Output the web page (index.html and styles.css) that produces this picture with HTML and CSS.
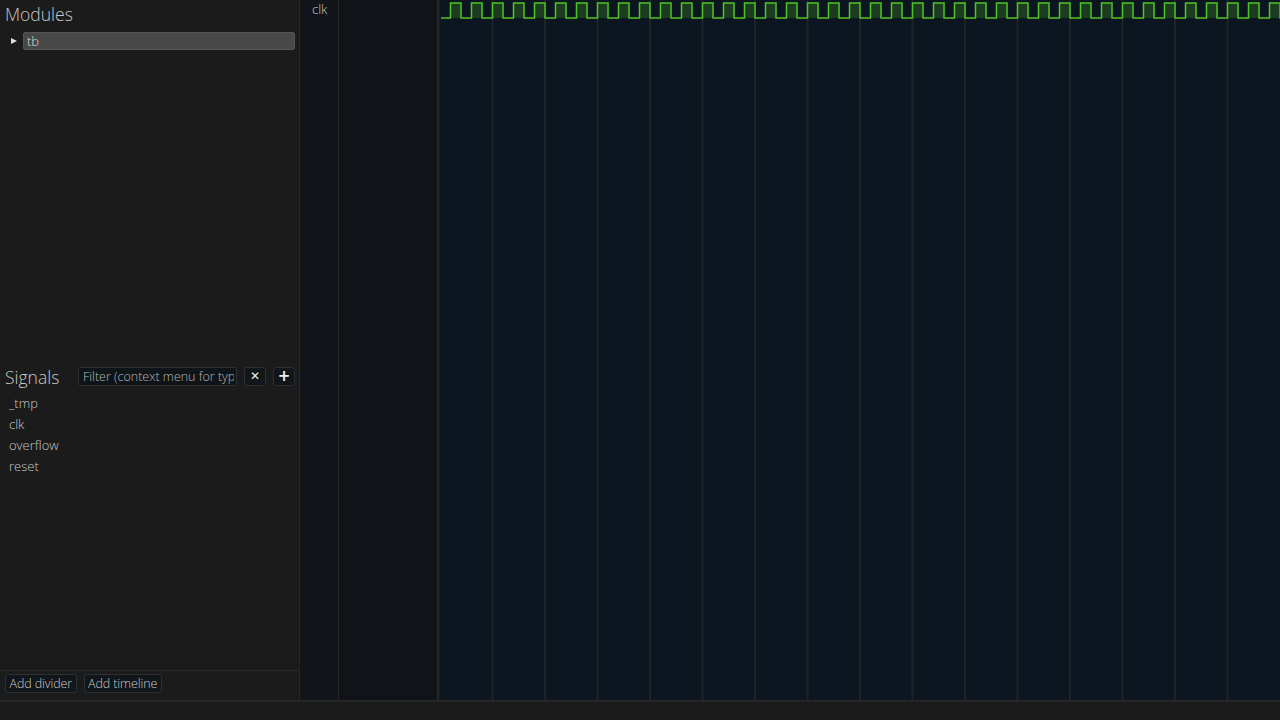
FILE: index.html
```html
<!DOCTYPE html>
<html>
<head>
<meta charset="utf-8">
<link rel="stylesheet" href="styles.css">
</head>
<body>
<div class="app">
  <div class="main">
    <aside class="sidebar">
      <section class="modules">
        <h2 class="heading">Modules</h2>
        <div class="tree-row">
          <span class="arrow"></span>
          <span class="tree-item selected">tb</span>
        </div>
      </section>
      <section class="signals">
        <div class="signals-head">
          <h2 class="heading">Signals</h2>
          <input class="filter" type="text" placeholder="Filter (context menu for type of filter)">
          <button class="icon-btn">&#x2715;</button>
          <button class="icon-btn plus">+</button>
        </div>
        <ul class="signal-list">
          <li>_tmp</li>
          <li>clk</li>
          <li>overflow</li>
          <li>reset</li>
        </ul>
      </section>
      <footer class="side-footer">
        <button class="btn">Add divider</button>
        <button class="btn">Add timeline</button>
      </footer>
    </aside>
    <div class="names-col">
      <div class="name-row">clk</div>
    </div>
    <div class="values-col"></div>
    <div class="splitter"></div>
    <div class="canvas">
      <svg class="wave" width="840" height="700" viewBox="0 0 840 700">
        <g class="grid">
          <line x1="52.5" y1="0" x2="52.5" y2="700"/>
          <line x1="105" y1="0" x2="105" y2="700"/>
          <line x1="157.5" y1="0" x2="157.5" y2="700"/>
          <line x1="210" y1="0" x2="210" y2="700"/>
          <line x1="262.5" y1="0" x2="262.5" y2="700"/>
          <line x1="315" y1="0" x2="315" y2="700"/>
          <line x1="367.5" y1="0" x2="367.5" y2="700"/>
          <line x1="420" y1="0" x2="420" y2="700"/>
          <line x1="472.5" y1="0" x2="472.5" y2="700"/>
          <line x1="525" y1="0" x2="525" y2="700"/>
          <line x1="577.5" y1="0" x2="577.5" y2="700"/>
          <line x1="630" y1="0" x2="630" y2="700"/>
          <line x1="682.5" y1="0" x2="682.5" y2="700"/>
          <line x1="735" y1="0" x2="735" y2="700"/>
          <line x1="787.5" y1="0" x2="787.5" y2="700"/>
        </g>
        <defs>
          <pattern id="clkfill" x="10.5" y="0" width="21" height="20" patternUnits="userSpaceOnUse">
            <rect x="0" y="0" width="10.5" height="20" class="hi-fill"/>
          </pattern>
        </defs>
        <rect x="10.5" y="3" width="829.5" height="15" fill="url(#clkfill)"/>
        <path class="clk-line" d="M1 18h9.5
          v-15h10.5v15h10.5 v-15h10.5v15h10.5 v-15h10.5v15h10.5 v-15h10.5v15h10.5 v-15h10.5v15h10.5
          v-15h10.5v15h10.5 v-15h10.5v15h10.5 v-15h10.5v15h10.5 v-15h10.5v15h10.5 v-15h10.5v15h10.5
          v-15h10.5v15h10.5 v-15h10.5v15h10.5 v-15h10.5v15h10.5 v-15h10.5v15h10.5 v-15h10.5v15h10.5
          v-15h10.5v15h10.5 v-15h10.5v15h10.5 v-15h10.5v15h10.5 v-15h10.5v15h10.5 v-15h10.5v15h10.5
          v-15h10.5v15h10.5 v-15h10.5v15h10.5 v-15h10.5v15h10.5 v-15h10.5v15h10.5 v-15h10.5v15h10.5
          v-15h10.5v15h10.5 v-15h10.5v15h10.5 v-15h10.5v15h10.5 v-15h10.5v15h10.5 v-15h10.5v15h10.5
          v-15h10.5v15h10.5 v-15h10.5v15h10.5 v-15h10.5v15h10.5 v-15h10.5v15h10.5 v-15h10.5v15h10.5
          v-15h10.5v15h10.5 v-15h10.5v15h10.5 v-15h10.5v15h10.5 v-15h10.5v15h10.5 v-15h10.5v15h10.5"/>
      </svg>
    </div>
  </div>
  <div class="status"></div>
</div>
</body>
</html>
```
FILE: styles.css
```css
* { box-sizing: border-box; }
html, body {
  margin: 0;
  padding: 0;
  background: #1b1b1b;
  width: 1280px;
  height: 720px;
  overflow: hidden;
  font-family: "Open Sans", "Noto Sans", sans-serif;
  color: #c8c8c8;
}
.app {
  display: flex;
  flex-direction: column;
  height: 720px;
}
.main {
  display: flex;
  height: 700px;
}
.sidebar {
  width: 300px;
  flex: none;
  display: flex;
  flex-direction: column;
  background: #1b1b1b;
  border-right: 1px solid #262626;
}
.heading {
  margin: 0;
  font-weight: 300;
  font-size: 17.5px;
  line-height: 22px;
  color: #c8c8c8;
}
.modules {
  height: 365px;
  padding: 3px 4px 0 5px;
}
.tree-row {
  display: flex;
  align-items: center;
  margin-top: 7px;
  height: 18px;
}
.arrow {
  width: 0;
  height: 0;
  margin-left: 6px;
  border-top: 3.5px solid transparent;
  border-bottom: 3.5px solid transparent;
  border-left: 6px solid #e0e0e0;
}
.tree-item {
  margin-left: 6px;
  flex: 1;
  height: 18px;
  font-size: 13px;
  font-weight: 300;
  padding-left: 3px;
  border-radius: 2px;
  color: #d8d8d8;
}
.tree-item.selected {
  background: #484848;
  border: 1px solid #555;
  line-height: 16px;
}
.signals {
  flex: 1;
  padding: 2px 4px 0 5px;
}
.signals-head {
  display: flex;
  align-items: center;
  height: 19px;
}
.signals-head .heading {
  width: 73px;
}
.filter {
  width: 159px;
  height: 19px;
  background: #0f1418;
  border: 1px solid #2c2f33;
  border-radius: 2px;
  color: #c0c0c0;
  font-family: inherit;
  font-size: 12.5px;
  font-weight: 300;
  padding: 0 2px 0 4px;
  outline: none;
}
.filter::placeholder { color: #b8b8b8; opacity: 1; }
.icon-btn {
  width: 22px;
  height: 19px;
  margin-left: 7px;
  padding: 0;
  background: #11161a;
  border: 1px solid #2c2f33;
  border-radius: 3px;
  color: #f0f0f0;
  font-family: "DejaVu Sans", sans-serif;
  font-size: 12px;
  font-weight: bold;
  line-height: 17px;
}
.icon-btn.plus { font-size: 15px; }
.signal-list {
  list-style: none;
  margin: 8px 0 0 0;
  padding: 0 0 0 4px;
}
.signal-list li {
  height: 21px;
  line-height: 18px;
  font-size: 13px;
  font-weight: 300;
  color: #c8c8c8;
}
.side-footer {
  height: 30px;
  border-top: 1px solid #2a2a2a;
  padding: 3px 0 0 5px;
  display: flex;
  gap: 7px;
  align-items: flex-start;
}
.btn {
  height: 19px;
  padding: 0 3.5px;
  background: #11161a;
  border: 1px solid #2c2f33;
  border-radius: 3px;
  color: #c8c8c8;
  font-family: inherit;
  font-size: 12.5px;
  font-weight: 300;
  line-height: 16px;
  letter-spacing: -0.1px;
}
.names-col {
  width: 39px;
  flex: none;
  background: #111519;
  border-right: 1px solid #262626;
}
.name-row {
  padding-left: 12px;
  height: 20px;
  line-height: 19px;
  font-size: 13px;
  font-weight: 300;
  color: #c8c8c8;
}
.values-col {
  width: 98px;
  flex: none;
  background: #101418;
}
.splitter {
  width: 3px;
  flex: none;
  background: #1e1e1e;
  border-left: 1px solid #2a2a2a;
}
.canvas {
  flex: 1;
  background: #0b1620;
  overflow: hidden;
}
.wave { display: block; }
.grid line {
  stroke: #202326;
  stroke-width: 2;
}
.hi-fill { fill: #1c3b20; }
.clk-line {
  fill: none;
  stroke: #4cc626;
  stroke-width: 1.5;
}
.status {
  height: 20px;
  background: #1b1b1b;
  border-top: 2px solid #252525;
}
```
